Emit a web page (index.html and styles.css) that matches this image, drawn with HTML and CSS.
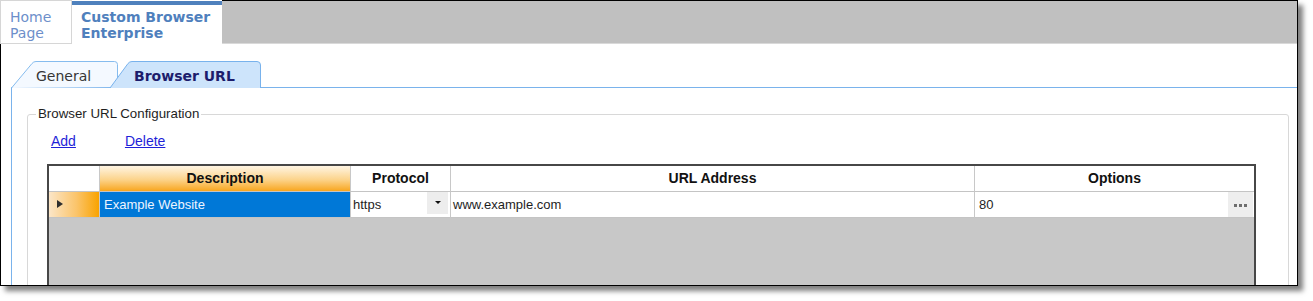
FILE: index.html
```html
<!DOCTYPE html>
<html>
<head>
<meta charset="utf-8">
<link rel="stylesheet" href="styles.css">
</head>
<body>
<div class="window">
  <div class="topbar">
    <div class="hometab">Home<br>Page</div>
    <div class="cbtab">Custom Browser<br>Enterprise</div>
    <div class="filler"></div>
  </div>
  <div class="content">
    <svg class="subtabs" width="1286" height="27" viewBox="0 0 1286 27">
      <path d="M0 26.5 H100 M249.5 26.5 H1286" stroke="#7ab3ec" stroke-width="1" fill="none"/>
      <path d="M0.5 27 L21 2.5 Q22.5 0.5 25 0.5 L103.5 0.5 Q106.5 0.5 106.5 3.5 L106.5 26" fill="#f4f9ff" stroke="#86bcee" stroke-width="1"/>
      <path d="M99 27 L117 2.5 Q118.5 0.5 121 0.5 L246 0.5 Q249.5 0.5 249.5 4 L249.5 27" fill="#cde4fb" stroke="#78b2ec" stroke-width="1"/>
      <text x="25" y="20" class="t-general">General</text>
      <text x="123" y="20" class="t-browser">Browser URL</text>
    </svg>
    <div class="panel">
      <fieldset class="group">
        <legend class="legend">Browser URL Configuration</legend>
        <div class="links">
          <a class="link">Add</a>
          <a class="link">Delete</a>
        </div>
        <div class="grid">
          <div class="row head">
            <div class="cell rh"></div>
            <div class="cell hc hc-sel">Description</div>
            <div class="cell hc">Protocol</div>
            <div class="cell hc">URL Address</div>
            <div class="cell hc last">Options</div>
          </div>
          <div class="row data">
            <div class="cell rh rh-sel"><span class="arrow"></span></div>
            <div class="cell dc sel">Example Website</div>
            <div class="cell dc proto"><span class="val">https</span><span class="ddbtn"><span class="ddtri"></span></span></div>
            <div class="cell dc url">www.example.com</div>
            <div class="cell dc opt last"><span class="val">80</span><span class="ellbtn"><i></i><i></i><i></i></span></div>
          </div>
        </div>
      </fieldset>
    </div>
  </div>
</div>
</body>
</html>
```

FILE: styles.css
```css
html, body {
  margin: 0;
  padding: 0;
  background: #fff;
}
body {
  width: 1313px;
  height: 301px;
  overflow: hidden;
}
.window {
  width: 1298px;
  height: 286px;
  box-sizing: border-box;
  border-right: 1px solid #000;
  border-bottom: 1px solid #000;
  box-shadow: 5px 5px 5px rgba(0, 0, 0, 0.5);
  overflow: hidden;
  display: flex;
  flex-direction: column;
  background: #fff;
}
.topbar {
  display: flex;
  height: 44px;
  flex: none;
}
.hometab {
  width: 72px;
  box-sizing: border-box;
  border: 1px solid #d6d6d6;
  margin: 0;
  padding: 8px 0 0 9px;
  font: 14px/16px "DejaVu Sans", sans-serif;
  color: #6d8fca;
  background: #fff;
}
.cbtab {
  width: 150px;
  box-sizing: border-box;
  margin-top: 1px;
  border-top: 4px solid #4f81bd;
  padding: 4px 0 0 9px;
  font: bold 14px/16px "DejaVu Sans", sans-serif;
  color: #4f80bd;
  background: #fff;
}
.filler {
  flex: 1;
  background: #c0c0c0;
  border-top: 1px solid #000;
  border-bottom: 1px solid #d9d9d9;
}
.content {
  flex: 1;
  border-left: 1px solid #000;
  padding: 17px 0 0 10px;
  display: flex;
  flex-direction: column;
}
.subtabs {
  display: block;
  flex: none;
}
.t-general {
  font: 14px "DejaVu Sans", sans-serif;
  fill: #363636;
}
.t-browser {
  font: bold 14px "DejaVu Sans", sans-serif;
  fill: #1c1c6c;
}
.panel {
  flex: 1;
  border-left: 1px solid #7ab3ec;
  padding: 18px 8px 0 15px;
}
.group {
  margin: 0;
  height: 300px;
  border: 1px solid #d8d8d8;
  border-radius: 3px;
  padding: 0 0 0 8px;
  font: 13px/16px "Liberation Sans", Arial, sans-serif;
}
.legend {
  padding: 0 2px;
  color: #1e1e1e;
  font: 13.3px/16px "Liberation Sans", Arial, sans-serif;
}
.links {
  display: flex;
  gap: 49px;
  margin: 11px 0 0 15px;
  font: 14px/16px "Liberation Sans", Arial, sans-serif;
}
.link {
  color: #1f1fd8;
  text-decoration: underline;
}
.grid {
  margin: 15px 0 0 11px;
  width: 1209px;
  height: 140px;
  box-sizing: border-box;
  border: 2px solid #474747;
  border-bottom: none;
  background: #c8c8c8;
}
.row {
  display: grid;
  grid-template-columns: 51px 251px 100px 524px 279px;
}
.cell {
  box-sizing: border-box;
  border-right: 1px solid #c8c8c8;
  border-bottom: 1px solid #c4c4c4;
  background: #fff;
  font-family: "Liberation Sans", Arial, sans-serif;
}
.cell.last {
  border-right: none;
}
.head .cell {
  height: 26px;
  line-height: 25px;
}
.hc {
  text-align: center;
  font-weight: bold;
  font-size: 14px;
  color: #111;
}
.hc-sel {
  background: linear-gradient(#fff5e3, #fcd38a 55%, #f8a61f);
}
.data .cell {
  height: 26px;
  line-height: 25px;
  font-size: 13px;
  color: #1e1e1e;
}
.rh-sel {
  background: linear-gradient(to right, #fbe6c8, #fbc46a 55%, #f9a300) !important;
  display: flex;
  align-items: center;
}
.arrow {
  display: block;
  margin: -1px 0 0 8px;
  width: 0;
  height: 0;
  border-left: 6px solid #2e2e2e;
  border-top: 4px solid transparent;
  border-bottom: 4px solid transparent;
}
.sel {
  background: #0078d7 !important;
  color: #eef4ff !important;
  padding-left: 4px;
}
.proto, .opt {
  display: flex;
}
.proto {
  padding-left: 2px;
}
.url {
  padding-left: 2px;
}
.opt {
  padding-left: 4px;
}
.val {
  flex: 1;
}
.ddbtn {
  width: 21px;
  height: 22px;
  margin-right: 2px;
  background: #ededed;
  display: flex;
  align-items: center;
  justify-content: center;
}
.ddtri {
  width: 0;
  height: 0;
  border-top: 3px solid #111;
  border-left: 3px solid transparent;
  border-right: 3px solid transparent;
  margin-top: -1px;
}
.ellbtn {
  width: 25px;
  height: 25px;
  margin-right: 1px;
  background: #eeeeee;
  display: flex;
  align-items: center;
  justify-content: center;
  gap: 2px;
}
.ellbtn i {
  display: block;
  width: 3px;
  height: 3px;
  background: #6e6e6e;
  margin-top: 1px;
}
```
